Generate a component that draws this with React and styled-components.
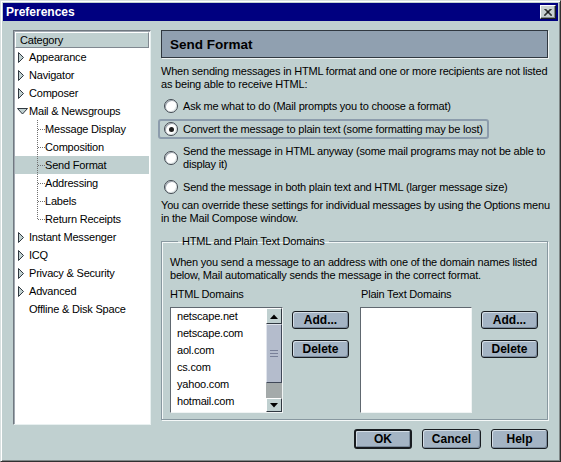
import React from 'react';
import styled, { createGlobalStyle, css } from 'styled-components';

const GlobalStyle = createGlobalStyle`
  html, body {
    margin: 0;
    padding: 0;
    background: #c0d0d0;
  }
  * {
    box-sizing: border-box;
  }
`;

const Window = styled.div`
  width: 561px;
  height: 462px;
  padding: 2px;
  background: #c0d0d0;
  border: 1px solid;
  border-color: #d8e0e0 #303030 #303030 #d8e0e0;
  box-shadow: inset 1px 1px 0 #ffffff, inset -1px -1px 0 #808888;
  font-family: "Liberation Sans", Arial, sans-serif;
  font-size: 11px;
  letter-spacing: -0.2px;
  color: #000;
  display: flex;
  flex-direction: column;
  overflow: hidden;
`;

const TitleBar = styled.div`
  height: 18px;
  flex-shrink: 0;
  background: #000080;
  display: flex;
  align-items: center;
  justify-content: space-between;
  padding: 0 2px 0 3px;
`;

const Title = styled.span`
  color: #fff;
  font-weight: bold;
  font-size: 12px;
  letter-spacing: 0;
`;

const CloseButton = styled.div`
  width: 16px;
  height: 14px;
  background: #c8d0d0;
  border: 1px solid;
  border-color: #ffffff #202020 #202020 #ffffff;
  box-shadow: inset -1px -1px 0 #808888;
  display: flex;
  align-items: center;
  justify-content: center;
`;

const Content = styled.div`
  display: flex;
  gap: 10px;
  margin-top: 9px;
  padding: 0 10px;
  height: 395px;
  flex-shrink: 0;
`;

const TreePanel = styled.div`
  width: 138px;
  background: #fff;
  border: 1px solid;
  border-color: #707880 #e8f0f0 #e8f0f0 #707880;
  box-shadow: inset 1px 1px 0 #a0a8b0;
  padding: 1px;
`;

const TreeHeader = styled.div`
  height: 16px;
  background: #c0d0d0;
  border: 1px solid;
  border-color: #ffffff #808890 #808890 #ffffff;
  padding-left: 4px;
  display: flex;
  align-items: center;
`;

const TreeRow = styled.div`
  height: 18px;
  display: flex;
  align-items: center;
  padding-left: ${p => (p.$child ? 16 : 2)}px;
  ${p =>
    p.$selected &&
    css`
      background: #c0d0d0;
    `}
`;

const TwistyBox = styled.span`
  width: 12px;
  height: 11px;
  display: flex;
  align-items: center;
  flex-shrink: 0;
`;

const TreeLabel = styled.span`
  white-space: nowrap;
`;

const RightColumn = styled.div`
  width: 387px;
  display: flex;
  flex-direction: column;
  white-space: nowrap;
`;

const SectionHeader = styled.div`
  height: 28px;
  flex-shrink: 0;
  background: #90a0b0;
  border: 1px solid #303840;
  box-shadow: 1px 1px 0 #f0f4f4;
  display: flex;
  align-items: center;
  padding-left: 8px;
  font-size: 13.5px;
  font-weight: bold;
  letter-spacing: 0;
`;

const Text = styled.p`
  margin: ${p => p.$margin || '0'};
  line-height: 13px;
`;

const RadioList = styled.div`
  display: flex;
  flex-direction: column;
  align-items: flex-start;
  gap: 3px;
`;

const RadioRow = styled.label`
  display: inline-flex;
  align-items: center;
  margin-left: -3px;
  padding: 1px 4px;
  border: 2px solid transparent;
  border-radius: 3px;
  line-height: 13px;
  ${p =>
    p.$focused &&
    css`
      border-color: #8c9cac;
    `}
`;

const RadioCircle = styled.span`
  width: 14px;
  height: 14px;
  border-radius: 50%;
  background: #fff;
  border: 1px solid #404850;
  box-shadow: inset 1px 1px 0 #a0a8b0, inset -1px -1px 0 #e0e8e8;
  margin-right: 5px;
  flex-shrink: 0;
  display: flex;
  align-items: center;
  justify-content: center;
  &::after {
    content: '';
    width: 5px;
    height: 5px;
    border-radius: 50%;
    background: ${p => (p.$checked ? '#202020' : 'transparent')};
  }
`;

const GroupBox = styled.fieldset`
  margin: 10px 0 0;
  padding: 0 8px 6px;
  border: 1px solid #8898a0;
  box-shadow: inset 1px 1px 0 #f4f8f8, 1px 1px 0 #f4f8f8;
  min-width: 0;
`;

const Legend = styled.legend`
  margin-left: 8px;
  padding: 0 4px;
  line-height: 13px;
`;

const DomainColumns = styled.div`
  display: flex;
  gap: 11px;
  margin-top: 6px;
`;

const DomainColumn = styled.div`
  display: flex;
  flex-direction: column;
`;

const ColumnLabel = styled.div`
  line-height: 13px;
  padding-left: ${p => (p.$indent ? 1 : 0)}px;
  margin-bottom: 6px;
`;

const ListRow = styled.div`
  display: flex;
  gap: 9px;
`;

const ListBox = styled.div`
  width: ${p => p.$width}px;
  height: 106px;
  background: #fff;
  border: 1px solid;
  border-color: #606870 #f0f4f4 #f0f4f4 #606870;
  display: flex;
`;

const Items = styled.div`
  flex: 1;
  padding-left: 6px;
`;

const Item = styled.div`
  height: 17px;
  line-height: 17px;
`;

const Scrollbar = styled.div`
  width: 16px;
  display: flex;
  flex-direction: column;
`;

const ScrollButton = styled.div`
  height: ${p => p.$h}px;
  background: #c0d0d0;
  border: 1px solid;
  border-color: #ffffff #303840 #303840 #ffffff;
  display: flex;
  align-items: center;
  justify-content: center;
`;

const Thumb = styled.div`
  height: 59px;
  background: #b4bccc;
  border: 1px solid;
  border-color: #e0e4ec #404858 #404858 #e0e4ec;
  display: flex;
  flex-direction: column;
  align-items: center;
  justify-content: center;
  gap: 2px;
`;

const Grip = styled.span`
  width: 8px;
  height: 1px;
  background: #788098;
`;

const Track = styled.div`
  flex: 1;
  background: #a4aaaa;
`;

const SideButtons = styled.div`
  display: flex;
  flex-direction: column;
  gap: 11px;
  padding-top: 4px;
`;

const Button = styled.button`
  width: ${p => p.$width || 57}px;
  height: ${p => p.$height || 18}px;
  padding: 0;
  border-radius: 3px;
  border: ${p => (p.$default ? 2 : 1)}px solid #181c20;
  background: #a4b4c4;
  box-shadow: inset 1px 1px 0 #d4dde6, inset -1px -1px 0 #7a8a9c;
  font-family: "Liberation Sans", Arial, sans-serif;
  font-size: 12px;
  font-weight: bold;
  color: #000;
`;

const Footer = styled.div`
  display: flex;
  justify-content: flex-end;
  gap: 10px;
  margin-top: 4px;
  padding-right: 10px;
`;

const RightTwisty = () => (
  <svg width="8" height="11" viewBox="0 0 8 11">
    <polygon points="1.5,0.5 6.5,5.5 1.5,10.5" fill="#c0d0d0" stroke="#303840" />
  </svg>
);

const DownTwisty = () => (
  <svg width="11" height="7" viewBox="0 0 11 7">
    <polygon points="0.5,0.5 10.5,0.5 5.5,6" fill="#c0d0d0" stroke="#303840" />
  </svg>
);

const Connector = ({ last }) => (
  <svg width="14" height="18" viewBox="0 0 14 18" style={{ flexShrink: 0 }}>
    <line
      x1="6.5"
      y1="0"
      x2="6.5"
      y2={last ? 10 : 18}
      stroke="#707070"
      strokeDasharray="1 1"
    />
    <line x1="7" y1="9.5" x2="14" y2="9.5" stroke="#707070" strokeDasharray="1 1" />
  </svg>
);

const categories = [
  { label: 'Appearance', twisty: 'right' },
  { label: 'Navigator', twisty: 'right' },
  { label: 'Composer', twisty: 'right' },
  { label: 'Mail & Newsgroups', twisty: 'down' },
  { label: 'Message Display', child: true },
  { label: 'Composition', child: true },
  { label: 'Send Format', child: true, selected: true },
  { label: 'Addressing', child: true },
  { label: 'Labels', child: true },
  { label: 'Return Receipts', child: true, last: true },
  { label: 'Instant Messenger', twisty: 'right' },
  { label: 'ICQ', twisty: 'right' },
  { label: 'Privacy & Security', twisty: 'right' },
  { label: 'Advanced', twisty: 'right' },
  { label: 'Offline & Disk Space' },
];

const radios = [
  { label: 'Ask me what to do (Mail prompts you to choose a format)' },
  { label: 'Convert the message to plain text (some formatting may be lost)', checked: true },
  {
    label: (
      <>
        Send the message in HTML anyway (some mail programs may not be able to
        <br />
        display it)
      </>
    ),
  },
  { label: 'Send the message in both plain text and HTML (larger message size)' },
];

const htmlDomains = ['netscape.net', 'netscape.com', 'aol.com', 'cs.com', 'yahoo.com', 'hotmail.com'];

export default function App() {
  return (
    <>
      <GlobalStyle />
      <Window>
        <TitleBar>
          <Title>Preferences</Title>
          <CloseButton>
            <svg width="8" height="7" viewBox="0 0 8 7">
              <path d="M0.5 0 L7.5 7 M1.5 0 L8 6.5 M7.5 0 L0.5 7 M6.5 0 L0 6.5" stroke="#000" strokeWidth="1" />
            </svg>
          </CloseButton>
        </TitleBar>

        <Content>
          <TreePanel>
            <TreeHeader>Category</TreeHeader>
            {categories.map(c => (
              <TreeRow key={c.label} $child={c.child} $selected={c.selected}>
                {c.child ? (
                  <Connector last={c.last} />
                ) : (
                  <TwistyBox>
                    {c.twisty === 'right' && <RightTwisty />}
                    {c.twisty === 'down' && <DownTwisty />}
                  </TwistyBox>
                )}
                <TreeLabel>{c.label}</TreeLabel>
              </TreeRow>
            ))}
          </TreePanel>

          <RightColumn>
            <SectionHeader>Send Format</SectionHeader>
            <Text $margin="7px 0 5px">
              When sending messages in HTML format and one or more recipients are not listed
              <br />
              as being able to receive HTML:
            </Text>
            <RadioList>
              {radios.map((r, i) => (
                <RadioRow key={i} $focused={r.checked}>
                  <RadioCircle $checked={r.checked} />
                  <span>{r.label}</span>
                </RadioRow>
              ))}
            </RadioList>
            <Text $margin="2px 0 0">
              You can override these settings for individual messages by using the Options menu
              <br />
              in the Mail Compose window.
            </Text>

            <GroupBox>
              <Legend>HTML and Plain Text Domains</Legend>
              <Text $margin="8px 0 0">
                When you send a message to an address with one of the domain names listed
                <br />
                below, Mail automatically sends the message in the correct format.
              </Text>
              <DomainColumns>
                <DomainColumn>
                  <ColumnLabel>HTML Domains</ColumnLabel>
                  <ListRow>
                    <ListBox $width={113}>
                      <Items>
                        {htmlDomains.map(d => (
                          <Item key={d}>{d}</Item>
                        ))}
                      </Items>
                      <Scrollbar>
                        <ScrollButton $h={16}>
                          <svg width="8" height="5" viewBox="0 0 8 5">
                            <polygon points="0,5 8,5 4,0.5" fill="#000" />
                          </svg>
                        </ScrollButton>
                        <Thumb>
                          <Grip />
                          <Grip />
                          <Grip />
                        </Thumb>
                        <Track />
                        <ScrollButton $h={14}>
                          <svg width="8" height="5" viewBox="0 0 8 5">
                            <polygon points="0,0 8,0 4,4.5" fill="#000" />
                          </svg>
                        </ScrollButton>
                      </Scrollbar>
                    </ListBox>
                    <SideButtons>
                      <Button>Add...</Button>
                      <Button>Delete</Button>
                    </SideButtons>
                  </ListRow>
                </DomainColumn>
                <DomainColumn>
                  <ColumnLabel $indent>Plain Text Domains</ColumnLabel>
                  <ListRow>
                    <ListBox $width={112} />
                    <SideButtons>
                      <Button>Add...</Button>
                      <Button>Delete</Button>
                    </SideButtons>
                  </ListRow>
                </DomainColumn>
              </DomainColumns>
            </GroupBox>
          </RightColumn>
        </Content>

        <Footer>
          <Button $default $width={58} $height={20}>OK</Button>
          <Button $width={59} $height={20}>Cancel</Button>
          <Button $width={57} $height={20}>Help</Button>
        </Footer>
      </Window>
    </>
  );
}
